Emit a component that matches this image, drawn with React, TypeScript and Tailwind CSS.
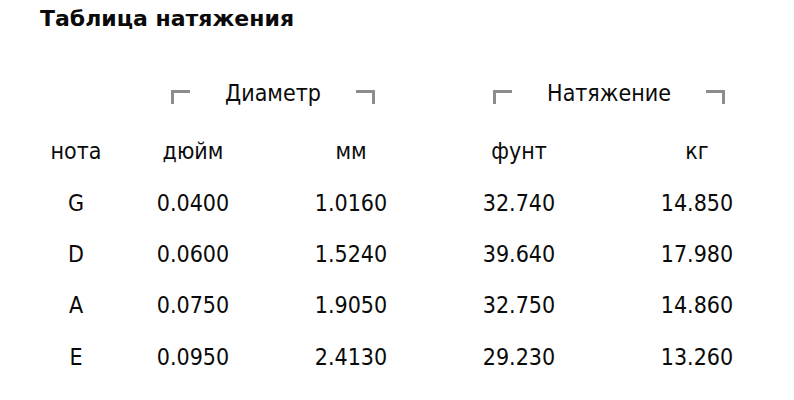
import React from 'react';

const rows = [
  ['G', '0.0400', '1.0160', '32.740', '14.850'],
  ['D', '0.0600', '1.5240', '39.640', '17.980'],
  ['A', '0.0750', '1.9050', '32.750', '14.860'],
  ['E', '0.0950', '2.4130', '29.230', '13.260'],
];

const cols = 'grid grid-cols-[80px_154px_162px_174px_182px] pl-[36px]';

const GroupHeader = ({ label }: { label: string }) => (
  <div className="flex items-center justify-center gap-[35px]">
    <div className="w-[19px] h-[14px] mt-[8px] border-t-[3px] border-l-[3px] border-[#8c8c8c]" />
    <span>{label}</span>
    <div className="w-[19px] h-[14px] mt-[8px] border-t-[3px] border-r-[3px] border-[#8c8c8c]" />
  </div>
);

export default function App() {
  return (
    <div className="w-[794px] h-[400px] bg-white text-[#0a0a0a] pt-[7px] font-['DejaVu_Sans_Condensed','DejaVu_Sans',sans-serif] text-[23px] overflow-hidden">
      <h1 className="pl-[40px] h-[24px] leading-[24px] font-bold text-[22px] font-['DejaVu_Sans',sans-serif]">Таблица натяжения</h1>

      {/* group headers */}
      <div className={`${cols} mt-[42px] h-[40px] items-center`}>
        <div />
        <div className="col-span-2 pr-[2px]">
          <GroupHeader label="Диаметр" />
        </div>
        <div className="col-span-2 pr-[2px]">
          <GroupHeader label="Натяжение" />
        </div>
      </div>

      {/* column headers */}
      <div className={`${cols} mt-[13px] h-[51.33px] items-center text-center`}>
        <div>нота</div>
        <div>дюйм</div>
        <div>мм</div>
        <div>фунт</div>
        <div>кг</div>
      </div>

      {rows.map(r => (
        <div key={r[0]} className={`${cols} h-[51.33px] items-center text-center`}>
          {r.map((v, i) => (
            <div key={i}>{v}</div>
          ))}
        </div>
      ))}
    </div>
  );
}
